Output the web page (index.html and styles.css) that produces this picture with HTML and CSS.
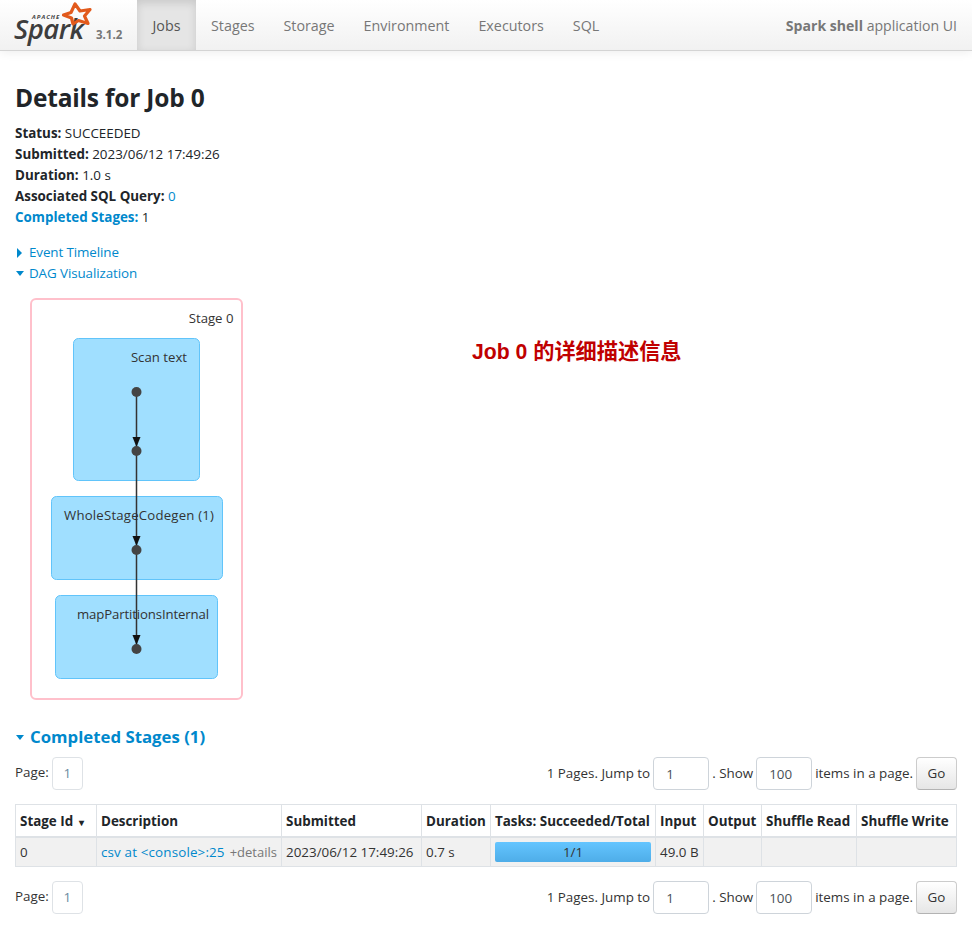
FILE: index.html
```html
<!DOCTYPE html>
<html lang="en">
  <head>
    <meta charset="UTF-8" />
    <meta name="viewport" content="width=device-width, initial-scale=1" />
    <title>Spark shell - Details for Job 0</title>
    <link rel="stylesheet" href="styles.css">
  </head>
  <body>
    <header class="navbar">
      <a class="brand">
        <span class="logo">
          <span class="logo-apache">APACHE</span>
          <span class="logo-spark">Spark</span>
          <svg class="logo-star" width="34" height="28" viewBox="60 0 34 28">
            <path d="M75 4 L80 11 L90 9.5 L84.5 16 L88 23.5 L78.5 20.5 L73 24 L71.5 18 L63.5 15 L71 12.5 Z" fill="none" stroke="#e25a1c" stroke-width="3.2" stroke-linejoin="round"/>
          </svg>
        </span>
        <span class="version">3.1.2</span>
      </a>
      <nav class="nav">
        <a class="active">Jobs</a>
        <a>Stages</a>
        <a>Storage</a>
        <a>Environment</a>
        <a>Executors</a>
        <a>SQL</a>
      </nav>
      <p class="app-title"><strong>Spark shell</strong> application UI</p>
    </header>

    <main>
      <h3 class="title">Details for Job 0</h3>

      <ul class="summary">
        <li><strong>Status:</strong> SUCCEEDED</li>
        <li><strong>Submitted:</strong> 2023/06/12 17:49:26</li>
        <li><strong>Duration:</strong> 1.0 s</li>
        <li><strong>Associated SQL Query:</strong> <a>0</a></li>
        <li><a><strong>Completed Stages:</strong></a> 1</li>
      </ul>

      <div class="toggles">
        <div class="toggle"><span class="arrow arrow-right"></span><a>Event Timeline</a></div>
        <div class="toggle"><span class="arrow arrow-down"></span><a>DAG Visualization</a></div>
      </div>

      <div class="dag">
        <svg width="230" height="404" viewBox="0 0 230 404">
          <rect class="stage" x="1" y="1" width="211" height="400" rx="5" />
          <text class="stage-label" x="203.5" y="25" text-anchor="end">Stage 0</text>

          <rect class="cluster" x="43.5" y="40.5" width="126" height="142" rx="5" />
          <rect class="cluster" x="21.5" y="198.5" width="171" height="83" rx="5" />
          <rect class="cluster" x="25.5" y="297.5" width="162" height="83" rx="5" />

          <text class="cluster-label" x="157" y="64" text-anchor="end">Scan text</text>
          <text class="cluster-label" x="184" y="222" text-anchor="end" textLength="150">WholeStageCodegen (1)</text>
          <text class="cluster-label" x="179" y="321" text-anchor="end" textLength="132">mapPartitionsInternal</text>

          <line class="edge" x1="106.5" y1="94" x2="106.5" y2="351" />
          <polygon class="head" points="102.5,139 110.5,139 106.5,149" />
          <polygon class="head" points="102.5,238 110.5,238 106.5,248" />
          <polygon class="head" points="102.5,337 110.5,337 106.5,347" />

          <circle class="node" cx="106.5" cy="94" r="5" />
          <circle class="node" cx="106.5" cy="153" r="5" />
          <circle class="node" cx="106.5" cy="252" r="5" />
          <circle class="node" cx="106.5" cy="351" r="5" />
        </svg>
        <p class="note">Job 0 的详细描述信息</p>
      </div>

      <h4 class="section"><span class="arrow arrow-down"></span><a>Completed Stages (1)</a></h4>

      <div class="pager">
        <div class="pages">
          <span>Page:</span>
          <span class="page-box">1</span>
        </div>
        <form class="jump">
          <span>1 Pages. Jump to</span>
          <input class="num" type="text" value="1" />
          <span>. Show</span>
          <input class="num" type="text" value="100" />
          <span>items in a page.</span>
          <button type="button" class="go">Go</button>
        </form>
      </div>

      <table class="stages">
        <colgroup>
          <col class="c1" /><col class="c2" /><col class="c3" /><col class="c4" /><col class="c5" /><col class="c6" /><col class="c7" /><col class="c8" /><col class="c9" />
        </colgroup>
        <thead>
          <tr>
            <th>Stage Id <span class="sort">▾</span></th>
            <th>Description</th>
            <th>Submitted</th>
            <th>Duration</th>
            <th>Tasks: Succeeded/Total</th>
            <th>Input</th>
            <th>Output</th>
            <th>Shuffle Read</th>
            <th>Shuffle Write</th>
          </tr>
        </thead>
        <tbody>
          <tr>
            <td>0</td>
            <td class="desc"><a>csv at &lt;console&gt;:25</a><span class="details">+details</span></td>
            <td>2023/06/12 17:49:26</td>
            <td>0.7 s</td>
            <td class="tasks"><div class="progress">1/1</div></td>
            <td>49.0 B</td>
            <td></td>
            <td></td>
            <td></td>
          </tr>
        </tbody>
      </table>

      <div class="pager pager-bottom">
        <div class="pages">
          <span>Page:</span>
          <span class="page-box">1</span>
        </div>
        <form class="jump">
          <span>1 Pages. Jump to</span>
          <input class="num" type="text" value="1" />
          <span>. Show</span>
          <input class="num" type="text" value="100" />
          <span>items in a page.</span>
          <button type="button" class="go">Go</button>
        </form>
      </div>
    </main>
  </body>
</html>
```

FILE: styles.css
```css
* {
  box-sizing: border-box;
}

body {
  margin: 0;
  font-family: "Open Sans", "Noto Sans", sans-serif;
  font-size: 13.4px;
  line-height: 21px;
  color: #212529;
  background: #fff;
}

a {
  color: #0088cc;
  text-decoration: none;
}

/* Navbar */
.navbar {
  display: flex;
  align-items: stretch;
  height: 51px;
  background: linear-gradient(to bottom, #fff, #f1f1f1);
  border-bottom: 1px solid #d4d4d4;
  box-shadow: 0 1px 10px rgba(0, 0, 0, 0.08);
}

.brand {
  display: flex;
  width: 137px;
  padding-left: 14px;
  color: #777;
}

.logo {
  position: relative;
  width: 82px;
  height: 50px;
}

.logo-star {
  position: absolute;
  left: 46px;
  top: 0;
}

.logo-apache {
  position: absolute;
  left: 18px;
  top: 14px;
  font-size: 6px;
  line-height: 6px;
  font-weight: 700;
  font-style: italic;
  letter-spacing: 1px;
  color: #444;
}

.logo-spark {
  position: absolute;
  left: 0;
  top: 20px;
  font-size: 27.5px;
  line-height: 18px;
  font-weight: 600;
  font-style: italic;
  letter-spacing: -0.5px;
  color: #3d3d3d;
}

.version {
  align-self: flex-end;
  margin-bottom: 5px;
  font-size: 11.5px;
  font-weight: 700;
  color: #777;
}

.nav {
  display: flex;
}

.nav a {
  display: flex;
  align-items: center;
  padding: 0 15px;
  margin-right: -1px;
  font-size: 14.3px;
  color: #777;
}

.nav a.active {
  justify-content: center;
  width: 59px;
  padding: 0;
  margin-right: 0;
  background: #e5e5e5;
  color: #555;
  box-shadow: inset 0 3px 8px rgba(0, 0, 0, 0.125);
}

.app-title {
  margin: 0 15px 0 auto;
  align-self: center;
  font-size: 14.1px;
  color: #777;
}

/* Main */
main {
  padding: 0 15px;
}

.title {
  margin: 31px 0 0;
  font-size: 24.5px;
  line-height: 32px;
  font-weight: 700;
  color: #212529;
  letter-spacing: -0.2px;
}

.summary {
  list-style: none;
  margin: 9px 0 0;
  padding: 0;
}

.toggles {
  margin-top: 14px;
}

.toggle {
  display: flex;
  align-items: center;
}

.toggle a {
  letter-spacing: -0.1px;
}

.arrow {
  display: inline-block;
  width: 0;
  height: 0;
  flex: none;
}

.arrow-right {
  margin: 0 7px 0 2px;
  border-left: 5px solid #0088cc;
  border-top: 5px solid transparent;
  border-bottom: 5px solid transparent;
}

.arrow-down {
  margin: 0 5px 0 1px;
  border-top: 5px solid #0088cc;
  border-left: 4.5px solid transparent;
  border-right: 4.5px solid transparent;
}

/* DAG */
.dag {
  position: relative;
  margin: 14px 0 0 15px;
  height: 404px;
}

.dag svg {
  display: block;
}

.stage {
  fill: #fff;
  stroke: #ffc0cb;
  stroke-width: 2;
}

.stage-label,
.cluster-label {
  font-family: "Open Sans", "Noto Sans", sans-serif;
  font-size: 13.2px;
  fill: #333;
}

.cluster {
  fill: #a0dfff;
  stroke: #61c4fa;
  stroke-width: 1;
}

.edge {
  stroke: #333;
  stroke-width: 1.5;
}

.head {
  fill: #111;
}

.node {
  fill: #444;
}

.note {
  position: absolute;
  left: 442px;
  top: 41px;
  margin: 0;
  font-family: "Liberation Sans", "Noto Sans CJK SC", sans-serif;
  font-size: 21.2px;
  line-height: 26px;
  font-weight: 700;
  color: #c00000;
}

/* Completed stages */
.section {
  display: flex;
  align-items: center;
  margin: 23px 0 0;
  font-size: 16.8px;
  line-height: 24px;
  font-weight: 700;
}

.section .arrow-down {
  margin-right: 6px;
}

.pager {
  display: flex;
  justify-content: space-between;
  align-items: center;
  margin-top: 8px;
  height: 33px;
  color: #333;
}

.pages {
  display: flex;
  align-items: center;
  gap: 3px;
}

.pages span:first-child {
  margin-top: -3px;
}

.page-box {
  display: flex;
  align-items: center;
  justify-content: center;
  width: 31px;
  height: 33px;
  border: 1px solid #dee2e6;
  border-radius: 4px;
  color: #6c8aa0;
}

.jump {
  display: flex;
  align-items: center;
  gap: 3px;
  margin: 0;
}

.num {
  width: 56px;
  height: 33px;
  padding: 0 12px;
  margin: 0;
  border: 1px solid #ced4da;
  border-radius: 4px;
  font: inherit;
  color: #495057;
}

.go {
  width: 41px;
  height: 33px;
  margin: 0;
  padding: 0;
  border: 1px solid #ccc;
  border-bottom-color: #b3b3b3;
  border-radius: 4px;
  background: linear-gradient(to bottom, #fff, #e6e6e6);
  font: inherit;
  color: #333;
}

/* Table */
.stages {
  width: 941px;
  margin-top: 14px;
  border-collapse: collapse;
  table-layout: fixed;
}

.c1 { width: 81px; }
.c2 { width: 185px; }
.c3 { width: 140px; }
.c4 { width: 69px; }
.c5 { width: 165px; }
.c6 { width: 48px; }
.c7 { width: 58px; }
.c8 { width: 95px; }
.c9 { width: 100px; }

.stages th,
.stages td {
  border: 1px solid #dee2e6;
  padding: 1px 4px 0;
  text-align: left;
  white-space: nowrap;
  overflow: hidden;
}

.stages th {
  height: 32px;
  padding-top: 3px;
  border-bottom-width: 2px;
  font-weight: 700;
  color: #212529;
}

.stages td {
  height: 30px;
  background: #f1f1f1;
  color: #333;
}

.sort {
  margin-left: 2px;
  font-size: 10px;
}

.desc a {
  letter-spacing: 0.15px;
}

.details {
  margin-left: 5px;
  font-size: 13px;
  color: #777;
}

.stages td.tasks {
  padding: 0 4px;
}

.progress {
  height: 20px;
  line-height: 20px;
  border-radius: 2px;
  background: linear-gradient(to bottom, #64c5ff, #4eade8);
  text-align: center;
  color: #333;
}

.pager-bottom {
  margin-top: 14px;
}
```
